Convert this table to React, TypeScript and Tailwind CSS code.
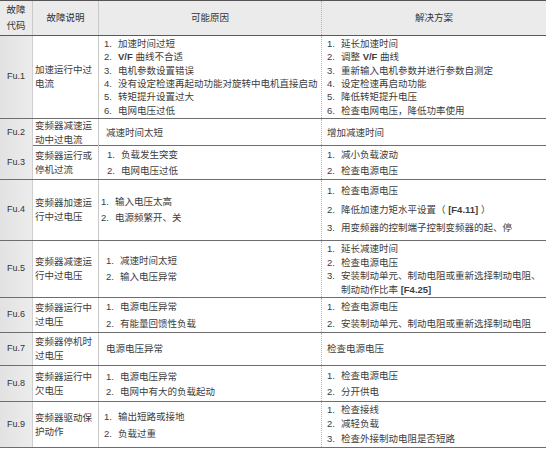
import type { ReactNode } from 'react';

type Cell = { lh: number; items?: ReactNode[][]; text?: string; pl?: number };

type Row = {
  code: string;
  desc: string[];
  h: number;
  cause: Cell;
  sol: Cell;
};

const B = ({ children }: { children: ReactNode }) => <span className="font-bold">{children}</span>;

const rows: Row[] = [
  {
    code: 'Fu.1',
    desc: ['加速运行中过', '电流'],
    h: 83,
    cause: {
      lh: 13.4,
      items: [
        ['加速时间过短'],
        [<><B>V/F</B> 曲线不合适</>],
        ['电机参数设置错误'],
        ['没有设定检速再起动功能对旋转中电机直接启动'],
        ['转矩提升设置过大'],
        ['电网电压过低'],
      ],
    },
    sol: {
      lh: 13.4,
      items: [
        ['延长加速时间'],
        [<>调整 <B>V/F</B> 曲线</>],
        ['重新输入电机参数并进行参数自测定'],
        ['设定检速再启动功能'],
        ['降低转矩提升电压'],
        ['检查电网电压，降低功率使用'],
      ],
    },
  },
  {
    code: 'Fu.2',
    desc: ['变频器减速运', '动中过电流'],
    h: 27,
    cause: { lh: 14, text: '减速时间太短', pl: 7 },
    sol: { lh: 14, text: '增加减速时间' },
  },
  {
    code: 'Fu.3',
    desc: ['变频器运行或', '停机过流'],
    h: 34,
    cause: { lh: 16, items: [['负载发生突变'], ['电网电压过低']], pl: 8 },
    sol: { lh: 16, items: [['减小负载波动'], ['检查电源电压']] },
  },
  {
    code: 'Fu.4',
    desc: ['变频器加速运', '行中过电压'],
    h: 61,
    cause: { lh: 16, items: [['输入电压太高'], ['电源频繁开、关']], pl: 2 },
    sol: {
      lh: 18.5,
      items: [
        ['检查电源电压'],
        [<>降低加速力矩水平设置（ <B>[F4.11]</B> ）</>],
        ['用变频器的控制端子控制变频器的起、停'],
      ],
    },
  },
  {
    code: 'Fu.5',
    desc: ['变频器减速运', '行中过电压'],
    h: 57,
    cause: { lh: 16, items: [['减速时间太短'], ['输入电压异常']], pl: 7 },
    sol: {
      lh: 13.5,
      items: [
        ['延长减速时间'],
        ['检查电源电压'],
        ['安装制动单元、制动电阻或重新选择制动电阻、', <>制动动作比率 <B>[F4.25]</B></>],
      ],
    },
  },
  {
    code: 'Fu.6',
    desc: ['变频器运行中', '过电压'],
    h: 35,
    cause: { lh: 17, items: [['电源电压异常'], ['有能量回馈性负载']], pl: 7 },
    sol: { lh: 17, items: [['检查电源电压'], ['安装制动单元、制动电阻或重新选择制动电阻']] },
  },
  {
    code: 'Fu.7',
    desc: ['变频器停机时', '过电压'],
    h: 33,
    cause: { lh: 14, text: '电源电压异常', pl: 7 },
    sol: { lh: 14, text: '检查电源电压' },
  },
  {
    code: 'Fu.8',
    desc: ['变频器运行中', '欠电压'],
    h: 36,
    cause: { lh: 15, items: [['电源电压异常'], ['电网中有大的负载起动']], pl: 7 },
    sol: { lh: 16, items: [['检查电源电压'], ['分开供电']] },
  },
  {
    code: 'Fu.9',
    desc: ['变频器驱动保', '护动作'],
    h: 46,
    cause: { lh: 17, items: [['输出短路或接地'], ['负载过重']], pl: 5 },
    sol: { lh: 14.5, items: [['检查接线'], ['减轻负载'], ['检查外接制动电阻是否短路']] },
  },
];

function CellBody({ cell, defaultPl }: { cell: Cell; defaultPl: number }) {
  const pl = cell.pl ?? defaultPl;
  if (cell.text) {
    return (
      <div style={{ paddingLeft: pl, lineHeight: `${cell.lh}px` }}>{cell.text}</div>
    );
  }
  return (
    <div style={{ paddingLeft: pl, lineHeight: `${cell.lh}px` }} className="flex flex-col">
      {cell.items?.map((lines, i) => (
        <div key={i} className="flex">
          <span className="w-[14px] shrink-0 font-['Liberation_Sans']">{i + 1}.</span>
          <span className="flex flex-col">
            {lines.map((l, j) => (
              <span key={j} className="whitespace-nowrap">
                {l}
              </span>
            ))}
          </span>
        </div>
      ))}
    </div>
  );
}

export default function App() {
  return (
    <div className="w-[546px] h-[449px] bg-white font-['Liberation_Sans','Noto_Sans_CJK_SC',sans-serif] text-[9.5px] text-[#3d3d3d]">
      <div className="border-t border-[#555]">
        {/* header */}
        <div className="grid h-[35px] grid-cols-[33px_66px_223px_1fr] border-b-[1.5px] border-[#5a5a5a] bg-[#ebebeb] text-[#333]">
          <div className="flex flex-col items-center justify-center border-r border-[#c9c9c9] leading-[16px]">
            <span>故障</span>
            <span>代码</span>
          </div>
          <div className="flex items-center justify-center border-r border-[#c9c9c9]">故障说明</div>
          <div className="flex items-center justify-center border-r border-dotted border-[#b5b5b5]">可能原因</div>
          <div className="flex items-center justify-center">解决方案</div>
        </div>

        {rows.map((r) => (
          <div
            key={r.code}
            style={{ height: r.h }}
            className="grid grid-cols-[33px_66px_223px_1fr] border-b-[1.5px] border-[#6e6e6e]"
          >
            <div className="flex items-center justify-center border-r border-[#cfcfcf] bg-gradient-to-r from-[#e2e2e2] to-[#ececec] text-[9px] text-[#333]">
              {r.code}
            </div>
            <div className="flex flex-col justify-center border-r border-[#c9c9c9] pl-[2px] leading-[14px]">
              {r.desc.map((d) => (
                <span key={d}>{d}</span>
              ))}
            </div>
            <div className="flex items-center border-r border-dotted border-[#b5b5b5]">
              <CellBody cell={r.cause} defaultPl={5} />
            </div>
            <div className="flex items-center">
              <CellBody cell={r.sol} defaultPl={5} />
            </div>
          </div>
        ))}
      </div>
    </div>
  );
}
